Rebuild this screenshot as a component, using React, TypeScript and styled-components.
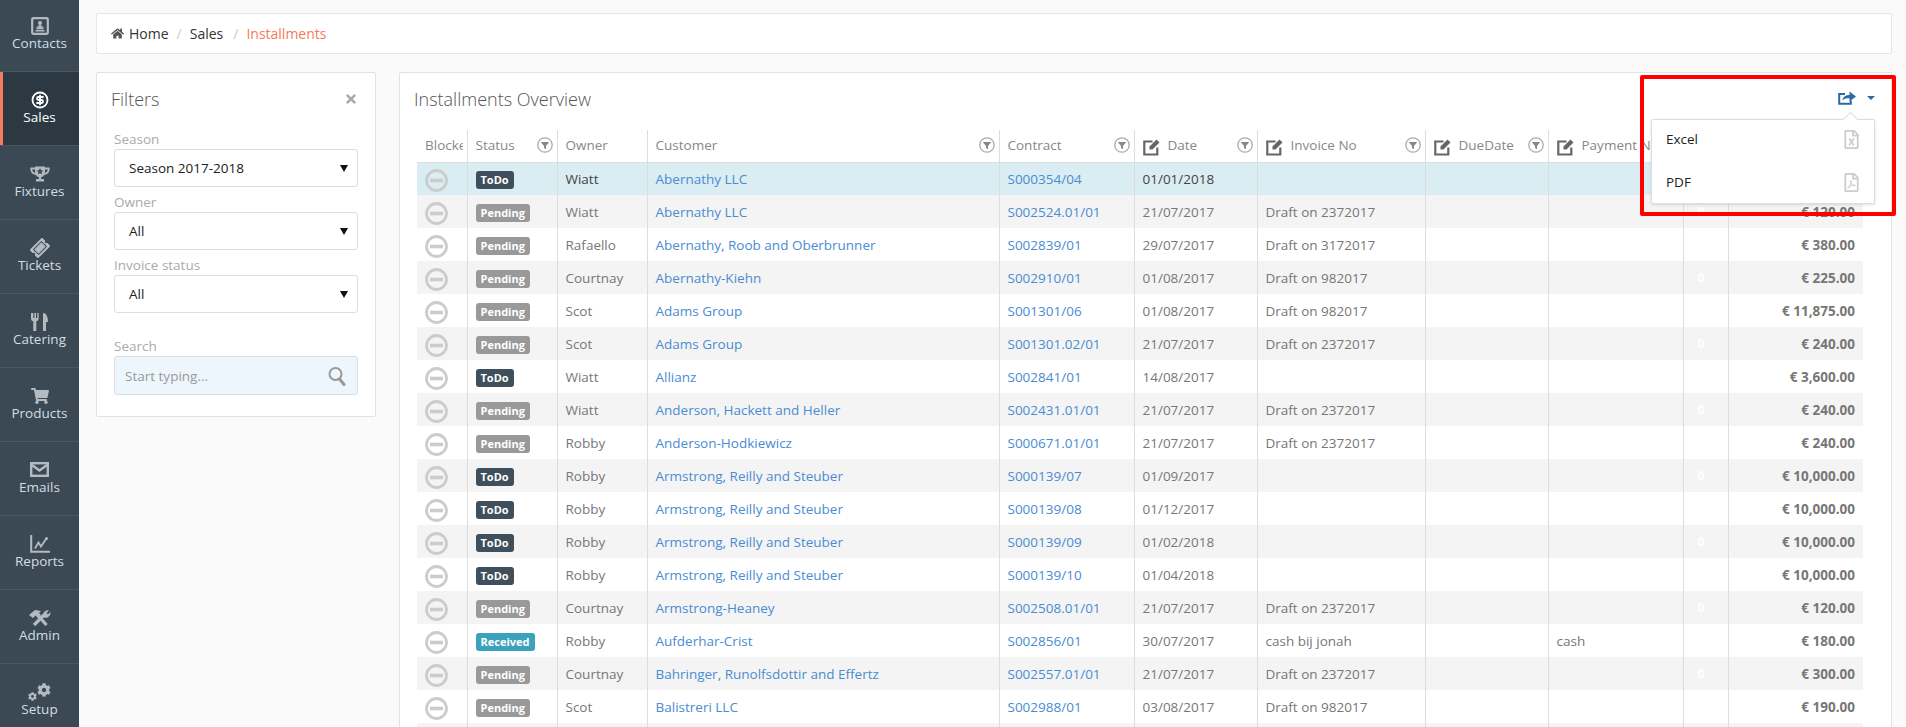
import React from 'react';
import styled, {createGlobalStyle} from "styled-components";
import {FaHome, FaRegFileExcel, FaRegFilePdf, FaTicketAlt, FaShoppingCart, FaCog, FaTimes} from "react-icons/fa";
import {CircleDollarSign} from "lucide-react";

type Status = 'ToDo' | 'Pending' | 'Received';

type RowData = {
    status?: Status;
    owner?: string;
    customer?: string;
    contract?: string;
    date?: string;
    invoice?: string;
    note?: string;
    amount?: string;
}

const rows: RowData[] = [
    {status: 'ToDo', owner: 'Wiatt', customer: 'Abernathy LLC', contract: 'S000354/04', date: '01/01/2018'},
    {status: 'Pending', owner: 'Wiatt', customer: 'Abernathy LLC', contract: 'S002524.01/01', date: '21/07/2017', invoice: 'Draft on 2372017', amount: '€ 120.00'},
    {status: 'Pending', owner: 'Rafaello', customer: 'Abernathy, Roob and Oberbrunner', contract: 'S002839/01', date: '29/07/2017', invoice: 'Draft on 3172017', amount: '€ 380.00'},
    {status: 'Pending', owner: 'Courtnay', customer: 'Abernathy-Kiehn', contract: 'S002910/01', date: '01/08/2017', invoice: 'Draft on 982017', amount: '€ 225.00'},
    {status: 'Pending', owner: 'Scot', customer: 'Adams Group', contract: 'S001301/06', date: '01/08/2017', invoice: 'Draft on 982017', amount: '€ 11,875.00'},
    {status: 'Pending', owner: 'Scot', customer: 'Adams Group', contract: 'S001301.02/01', date: '21/07/2017', invoice: 'Draft on 2372017', amount: '€ 240.00'},
    {status: 'ToDo', owner: 'Wiatt', customer: 'Allianz', contract: 'S002841/01', date: '14/08/2017', amount: '€ 3,600.00'},
    {status: 'Pending', owner: 'Wiatt', customer: 'Anderson, Hackett and Heller', contract: 'S002431.01/01', date: '21/07/2017', invoice: 'Draft on 2372017', amount: '€ 240.00'},
    {status: 'Pending', owner: 'Robby', customer: 'Anderson-Hodkiewicz', contract: 'S000671.01/01', date: '21/07/2017', invoice: 'Draft on 2372017', amount: '€ 240.00'},
    {status: 'ToDo', owner: 'Robby', customer: 'Armstrong, Reilly and Steuber', contract: 'S000139/07', date: '01/09/2017', amount: '€ 10,000.00'},
    {status: 'ToDo', owner: 'Robby', customer: 'Armstrong, Reilly and Steuber', contract: 'S000139/08', date: '01/12/2017', amount: '€ 10,000.00'},
    {status: 'ToDo', owner: 'Robby', customer: 'Armstrong, Reilly and Steuber', contract: 'S000139/09', date: '01/02/2018', amount: '€ 10,000.00'},
    {status: 'ToDo', owner: 'Robby', customer: 'Armstrong, Reilly and Steuber', contract: 'S000139/10', date: '01/04/2018', amount: '€ 10,000.00'},
    {status: 'Pending', owner: 'Courtnay', customer: 'Armstrong-Heaney', contract: 'S002508.01/01', date: '21/07/2017', invoice: 'Draft on 2372017', amount: '€ 120.00'},
    {status: 'Received', owner: 'Robby', customer: 'Aufderhar-Crist', contract: 'S002856/01', date: '30/07/2017', invoice: 'cash bij jonah', note: 'cash', amount: '€ 180.00'},
    {status: 'Pending', owner: 'Courtnay', customer: 'Bahringer, Runolfsdottir and Effertz', contract: 'S002557.01/01', date: '21/07/2017', invoice: 'Draft on 2372017', amount: '€ 300.00'},
    {status: 'Pending', owner: 'Scot', customer: 'Balistreri LLC', contract: 'S002988/01', date: '03/08/2017', invoice: 'Draft on 982017', amount: '€ 190.00'},
    {},
];

const GlobalStyle = createGlobalStyle`
html, body {
    margin: 0;
    height: 727px;
    overflow: hidden;
    background: #fafafa;
    font-family: "Open Sans", "Liberation Sans", sans-serif;
    font-size: 13.5px;
    color: #777;
}
* {
    box-sizing: border-box;
}`;

const Page = styled.div`
display: flex;
height: 727px;
overflow: hidden;
position: relative;`;

const Sidebar = styled.nav`
width: 79px;
flex-shrink: 0;
background: #3b4954;
display: flex;
flex-direction: column;`;

const NavItem = styled.a<{ $active?: boolean }>`
height: 74px;
flex-shrink: 0;
padding-top: 18px;
display: flex;
flex-direction: column;
align-items: center;
border-bottom: 1px solid #4a5761;
box-shadow: ${(props) => props.$active ? 'inset 3px 0 0 #f47b5e' : 'none'};
background: ${(props) => props.$active ? '#2c3943' : 'transparent'};
color: ${(props) => props.$active ? '#fff' : '#d3dde3'};
&:first-child {
    height: 72px;
    padding-top: 16px;
}`;

const NavIcon = styled.span<{ $active?: boolean }>`
height: 19px;
display: flex;
align-items: center;
justify-content: center;
color: ${(props) => props.$active ? '#fff' : '#b3bbc0'};`;

const NavLabel = styled.span`
line-height: 16px;`;

const GearPair = styled.span`
display: flex;
align-items: flex-end;
height: 19px;
& > svg:last-child {
    margin-bottom: 4px;
}`;

const Content = styled.div`
flex: 1;
min-width: 0;
padding: 13px 14px 0 17px;
display: flex;
flex-direction: column;
gap: 18px;`;

const Breadcrumb = styled.div`
height: 41px;
flex-shrink: 0;
background: #fff;
border: 1px solid #e6e6e6;
border-radius: 2px;
display: flex;
align-items: center;
padding-left: 14px;
gap: 8px;
font-size: 14px;
color: #333;`;

const HomeLink = styled.span`
display: flex;
align-items: center;
gap: 5px;`;

const Crumb = styled.span`
padding-right: 2px;`;

const Separator = styled.span`
color: #ccc;`;

const Current = styled.span`
color: #f47b5e;`;

const Columns = styled.div`
display: flex;
gap: 23px;
align-items: flex-start;`;

const FilterCard = styled.aside`
width: 280px;
flex-shrink: 0;
height: 345px;
background: #fff;
border: 1px solid #e2e2e2;
border-radius: 2px;
padding: 14px 17px 0 17px;`;

const CardTitle = styled.h3`
margin: 0 0 0 -3px;
font-size: 18px;
line-height: 24px;
font-weight: 300;
color: #555;`;

const FilterHead = styled.div`
display: flex;
justify-content: space-between;
align-items: center;
margin: 0 0 19px 0;
color: #aaa;`;

const FieldLabel = styled.label`
display: block;
color: #aaa;
line-height: 18px;
margin-top: 6px;`;

const SelectBox = styled.div`
height: 38px;
margin-top: 1px;
background: #fff;
border: 1px solid #ddd;
border-radius: 3px;
display: flex;
align-items: center;
justify-content: space-between;
padding: 0 9px 0 14px;
color: #222;
&::after {
    content: '';
    border-left: 4px solid transparent;
    border-right: 4px solid transparent;
    border-top: 7px solid #111;
}`;

const SearchBox = styled.div`
height: 39px;
margin-top: 1px;
background: #eef6fd;
border: 1px solid #ddd;
border-radius: 3px;
display: flex;
align-items: center;
justify-content: space-between;
padding: 0 11px 0 10px;
color: #999;`;

const SearchField = styled.div`
margin-top: 24px;
& > label {
    margin-top: 0;
}`;

const Panel = styled.section`
flex: 1;
min-width: 0;
height: 700px;
background: #fff;
border: 1px solid #e2e2e2;
border-radius: 2px;
padding: 0 0 0 17px;
position: relative;`;

const PanelHead = styled.div`
height: 57px;
padding-top: 14px;`;

const Table = styled.table`
width: 1446px;
table-layout: fixed;
border-collapse: collapse;`;

const Th = styled.th<{ $width: number }>`
width: ${(props) => props.$width}px;
height: 32px;
padding: 0 0 1px 8px;
font-weight: 400;
text-align: left;
color: #888;
white-space: nowrap;
overflow: hidden;
border-right: 1px solid #ddd;
border-bottom: 1px solid #ddd;
&:last-child {
    border-right: none;
}`;

const ThInner = styled.div`
display: flex;
align-items: center;
gap: 7px;
padding-right: 4px;`;

const ThText = styled.span`
flex: 1;
overflow: hidden;`;

const Row = styled.tr<{ $selected?: boolean }>`
height: 33px;
background: ${(props) => props.$selected ? '#d9edf2' : 'transparent'};
color: ${(props) => props.$selected ? '#444' : '#777'};
&:nth-child(even) {
    background: #f4f4f4;
}`;

const Td = styled.td<{ $align?: string }>`
padding: 0 8px;
border-right: 1px solid #ddd;
white-space: nowrap;
text-align: ${(props) => props.$align || 'left'};
&:last-child {
    border-right: none;
}`;

const AmountCell = styled(Td)`
font-weight: 700;
color: #777;`;

const ZeroCell = styled(Td)`
padding-left: 14px;
color: #fff;
font-weight: 700;
font-size: 12px;`;

const LinkText = styled.a`
color: #4a8cd2;`;

const badgeColors = {ToDo: '#3f4f5b', Pending: '#999', Received: '#3ba2bd'};

const Badge = styled.span<{ $status: Status }>`
display: inline-block;
height: 18px;
line-height: 18px;
margin-top: 3px;
padding: 0 5px;
border-radius: 3px;
font-size: 11px;
font-weight: 700;
color: #fff;
vertical-align: middle;
background: ${(props) => badgeColors[props.$status]};`;

const ExportWrap = styled.div`
position: absolute;
top: 18px;
right: 16px;
display: flex;
align-items: center;
gap: 11px;
color: #2a6aa5;`;

const Caret = styled.span`
width: 0;
height: 0;
border-left: 4.5px solid transparent;
border-right: 4.5px solid transparent;
border-top: 4.5px solid #2a6aa5;`;

const ExportMenu = styled.div`
position: absolute;
top: 28px;
right: 0;
width: 224px;
height: 85px;
background: #fff;
border: 1px solid #ddd;
border-radius: 2px;
box-shadow: 0 1px 3px rgba(0, 0, 0, .12);
display: flex;
flex-direction: column;
gap: 5px;
&::before {
    content: '';
    position: absolute;
    top: -6px;
    right: 18px;
    width: 10px;
    height: 10px;
    background: #fff;
    border-left: 1px solid #ddd;
    border-top: 1px solid #ddd;
    transform: rotate(45deg);
}`;

const MenuItem = styled.div`
height: 38px;
display: flex;
align-items: center;
justify-content: space-between;
padding: 0 13px 0 14px;
color: #222;
font-weight: 500;
& > svg {
    color: #ccc;
}`;

const RedFrame = styled.div`
position: absolute;
left: 1640px;
top: 75px;
width: 256px;
height: 141px;
border: 4px solid #f00;
border-radius: 2px;
pointer-events: none;`;

const MinusCircle = () => (
    <svg width="23" height="23" viewBox="0 0 23 23" style={{display: 'block', marginTop: 3}}>
        <circle cx="11.5" cy="11.5" r="10" fill="none" stroke="#ccc" strokeWidth="2.8"/>
        <rect x="5" y="9.7" width="13" height="3.6" fill="#ccc"/>
    </svg>
);

const FilterIcon = () => (
    <svg width="16" height="16" viewBox="0 0 16 16" style={{flexShrink: 0}}>
        <circle cx="8" cy="8" r="7.2" fill="none" stroke="#aaa" strokeWidth="1.3"/>
        <path d="M3.8 5h8.4L9 9v3.2L7 11V9z" fill="#888"/>
    </svg>
);

const EditIcon = () => (
    <svg width="18" height="18" viewBox="0 0 18 18" style={{flexShrink: 0, marginTop: 4}}>
        <path d="M9.5 3.5H1.3v13h13V9.5" fill="none" stroke="#666" strokeWidth="2.2"/>
        <path d="M6.5 8.5 13.5 1.5l3 3-7 7h-3z" fill="#666"/>
    </svg>
);

const ShareIcon = () => (
    <svg width="18" height="14" viewBox="0 0 18 14" fill="currentColor">
        <path d="M7 3H1.2v9.8h11.6V9.5" fill="none" stroke="currentColor" strokeWidth="2"/>
        <path d="M4.5 9.5C5 5.5 8 4 11.5 4V.5L18 5.5l-6.5 5V7.2C8.5 7 6 7.5 4.5 9.5z"/>
    </svg>
);

const SearchIcon = () => (
    <svg width="18" height="20" viewBox="0 0 18 20" fill="none" stroke="#999">
        <circle cx="7.5" cy="8" r="6" strokeWidth="2"/>
        <path d="M11.5 13 16 18.5" strokeWidth="3" strokeLinecap="round"/>
    </svg>
);

const ContactsIcon = () => (
    <svg width="18" height="18" viewBox="0 0 18 18" fill="currentColor">
        <rect x="1.2" y="1.2" width="15.6" height="15.6" rx="1" fill="none" stroke="currentColor" strokeWidth="2.2"/>
        <circle cx="9" cy="6" r="2"/>
        <path d="M7.6 8h2.8v1.5h2V12h-6.800V9.500h2zM4.500 12.800h9v1.600h-9z"/>
    </svg>
);

const TrophyIcon = () => (
    <svg width="20" height="16" viewBox="0 0 20 16" fill="currentColor">
        <path d="M5 .5h10v5.500c0 3-2 5-4 5.500V13h3v2.500H6V13h3v-1.500C7 11 5 9 5 6z"/>
        <path d="M5 2.500H1.200c0 3 1.500 5 4.500 5.500M15 2.500h3.800c0 3-1.500 5-4.500 5.500" fill="none" stroke="currentColor" strokeWidth="1.800"/>
        <path d="m10 2 1 2.300 2.400.2-1.800 1.600.5 2.400L10 7.300 7.900 8.500l.5-2.400-1.800-1.600 2.400-.2z" fill="#3b4954"/>
    </svg>
);

const CateringIcon = () => (
    <svg width="19" height="18" viewBox="0 0 19 18" fill="currentColor">
        <path d="M1 0v5.500C1 7.200 2 8 3.300 8.300V18h3V8.300C7.600 8 8.600 7.200 8.600 5.500V0H7.200v5H6V0H4.400v5H3.300V0z"/>
        <path d="M13 0c3.500 0 5 4 5 9h-2v9h-3z"/>
    </svg>
);

const EmailIcon = () => (
    <svg width="19" height="15" viewBox="0 0 19 15" fill="none" stroke="currentColor" strokeWidth="2.400">
        <rect x="1.200" y="1.200" width="16.600" height="12.600"/>
        <path d="m2 3 7.500 5.500L17 3"/>
    </svg>
);

const ReportsIcon = () => (
    <svg width="20" height="18" viewBox="0 0 20 18" fill="none" stroke="currentColor">
        <path d="M1.200 0v16.800H20" strokeWidth="2"/>
        <path d="m5 13.500 3.500-6 2.500 4 5-7.500" strokeWidth="1.800"/>
        <circle cx="16.500" cy="3.500" r="1.500" fill="currentColor" stroke="none"/>
    </svg>
);

const AdminIcon = () => (
    <svg width="24" height="18" viewBox="0 0 24 18" fill="currentColor">
        <path d="M1 6 7 1l6 1-2 2 2 2-3 3-2.500-2.500L5 9z"/>
        <path d="m10 6.500 8.500 9.500" stroke="currentColor" strokeWidth="3.200" fill="none"/>
        <path d="m6 16 10-10" stroke="currentColor" strokeWidth="3.200" fill="none"/>
        <path d="M21 1.500 18.500 4 20 5.500 22.500 3A5 5 0 0 1 16 8.500L15 5a5 5 0 0 1 6-3.500z"/>
    </svg>
);

const navItems = [
    {label: 'Contacts', icon: <ContactsIcon/>},
    {label: 'Sales', icon: <CircleDollarSign size={18} strokeWidth={2.400}/>, active: true},
    {label: 'Fixtures', icon: <TrophyIcon/>},
    {label: 'Tickets', icon: <FaTicketAlt size={18} style={{transform: 'rotate(-45deg)'}}/>},
    {label: 'Catering', icon: <CateringIcon/>},
    {label: 'Products', icon: <FaShoppingCart size={18}/>},
    {label: 'Emails', icon: <EmailIcon/>},
    {label: 'Reports', icon: <ReportsIcon/>},
    {label: 'Admin', icon: <AdminIcon/>},
    {label: 'Setup', icon: <GearPair><FaCog size={9}/><FaCog size={14}/></GearPair>},
];

const HeaderCell = ({width, label, edit, filter}: { width: number, label: string, edit?: boolean, filter?: boolean }) => (
    <Th $width={width}>
        <ThInner>
            {edit && <EditIcon/>}
            <ThText>{label}</ThText>
            {filter && <FilterIcon/>}
        </ThInner>
    </Th>
);

const App = () => {
    return (
        <Page>
            <GlobalStyle/>
            <Sidebar>
                {navItems.map((item) => (
                    <NavItem key={item.label} $active={item.active}>
                        <NavIcon $active={item.active}>{item.icon}</NavIcon>
                        <NavLabel>{item.label}</NavLabel>
                    </NavItem>
                ))}
            </Sidebar>
            <Content>
                <Breadcrumb>
                    <HomeLink><FaHome size={13} color="#555"/>Home</HomeLink>
                    <Separator>/</Separator>
                    <Crumb>Sales</Crumb>
                    <Separator>/</Separator>
                    <Current>Installments</Current>
                </Breadcrumb>
                <Columns>
                    <FilterCard>
                        <FilterHead>
                            <CardTitle>Filters</CardTitle>
                            <FaTimes size={14}/>
                        </FilterHead>
                        <FieldLabel>Season</FieldLabel>
                        <SelectBox>Season 2017-2018</SelectBox>
                        <FieldLabel>Owner</FieldLabel>
                        <SelectBox>All</SelectBox>
                        <FieldLabel>Invoice status</FieldLabel>
                        <SelectBox>All</SelectBox>
                        <SearchField>
                            <FieldLabel>Search</FieldLabel>
                            <SearchBox>Start typing...<SearchIcon/></SearchBox>
                        </SearchField>
                    </FilterCard>
                    <Panel>
                        <PanelHead>
                            <CardTitle>Installments Overview</CardTitle>
                        </PanelHead>
                        <ExportWrap>
                            <ShareIcon/>
                            <Caret/>
                            <ExportMenu>
                                <MenuItem>Excel<FaRegFileExcel size={19}/></MenuItem>
                                <MenuItem>PDF<FaRegFilePdf size={19}/></MenuItem>
                            </ExportMenu>
                        </ExportWrap>
                        <Table>
                            <thead>
                            <tr>
                                <HeaderCell width={50} label="Blocked"/>
                                <HeaderCell width={90} label="Status" filter/>
                                <HeaderCell width={90} label="Owner"/>
                                <HeaderCell width={352} label="Customer" filter/>
                                <HeaderCell width={135} label="Contract" filter/>
                                <HeaderCell width={123} label="Date" edit filter/>
                                <HeaderCell width={168} label="Invoice No" edit filter/>
                                <HeaderCell width={123} label="DueDate" edit filter/>
                                <HeaderCell width={135} label="Payment Note" edit/>
                                <HeaderCell width={45} label=""/>
                                <HeaderCell width={135} label="Amount"/>
                            </tr>
                            </thead>
                            <tbody>
                            {rows.map((row, i) => (
                                <Row key={i} $selected={i === 0}>
                                    <Td>{row.status && <MinusCircle/>}</Td>
                                    <Td>{row.status && <Badge $status={row.status}>{row.status}</Badge>}</Td>
                                    <Td>{row.owner}</Td>
                                    <Td><LinkText>{row.customer}</LinkText></Td>
                                    <Td><LinkText>{row.contract}</LinkText></Td>
                                    <Td>{row.date}</Td>
                                    <Td>{row.invoice}</Td>
                                    <Td/>
                                    <Td>{row.note}</Td>
                                    <ZeroCell>{row.status && '0'}</ZeroCell>
                                    <AmountCell $align="right">{row.amount}</AmountCell>
                                </Row>
                            ))}
                            </tbody>
                        </Table>
                    </Panel>
                </Columns>
            </Content>
            <RedFrame/>
        </Page>
    );
};

export default App;
